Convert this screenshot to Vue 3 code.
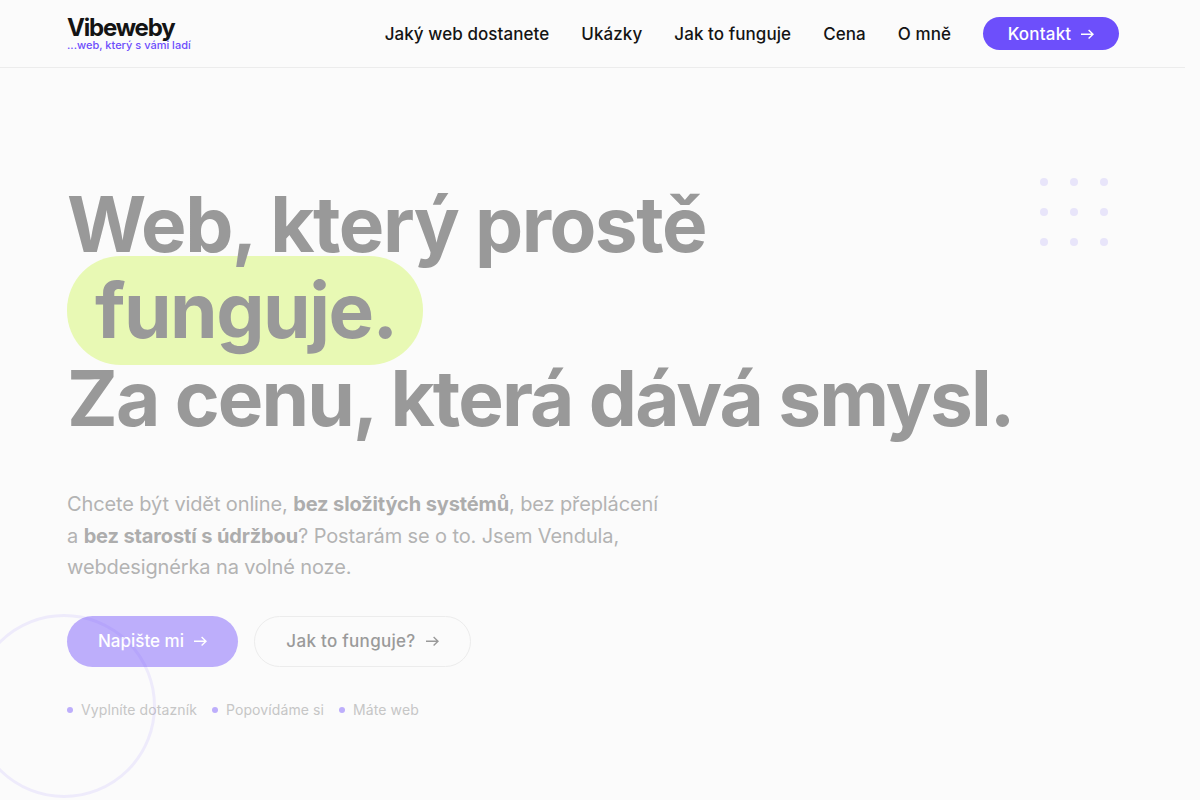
<script setup>
const links = ['Jaký web dostanete', 'Ukázky', 'Jak to funguje', 'Cena', 'O mně']
const steps = ['Vyplníte dotazník', 'Popovídáme si', 'Máte web']
</script>

<template>
  <div class="page">
    <header class="header">
      <div class="logo">
        <span class="logo-name">Vibeweby</span>
        <span class="logo-sub">...web, který s vámi ladí</span>
      </div>
      <nav class="nav">
        <a v-for="link in links" :key="link" class="nav-link">{{ link }}</a>
        <a class="nav-cta">Kontakt
          <svg class="arrow" width="14" height="12" viewBox="0 0 14 12" fill="none" stroke="currentColor" stroke-width="1.4"><path d="M1 6.2h12M8.6 2l4.4 4.2-4.4 4.2" /></svg>
        </a>
      </nav>
    </header>

    <main class="hero">
      <div class="circle"></div>
      <div class="dots">
        <span v-for="n in 9" :key="n" class="dot"></span>
      </div>
      <h1 class="title">
        <span class="line">Web, který prostě</span>
        <span class="pill">funguje.</span>
        <span class="line line-long">Za cenu, která dává smysl.</span>
      </h1>
      <p class="lead">
        Chcete být vidět online, <b>bez složitých systémů</b>, bez přeplácení<br />
        a <b>bez starostí s údržbou</b>? Postarám se o to. Jsem Vendula,<br />
        webdesignérka na volné noze.
      </p>
      <div class="actions">
        <a class="btn btn-primary">Napište mi
          <svg class="arrow" width="14" height="12" viewBox="0 0 14 12" fill="none" stroke="currentColor" stroke-width="1.4"><path d="M1 6.2h12M8.6 2l4.4 4.2-4.4 4.2" /></svg>
        </a>
        <a class="btn btn-ghost">Jak to funguje?
          <svg class="arrow" width="14" height="12" viewBox="0 0 14 12" fill="none" stroke="currentColor" stroke-width="1.4"><path d="M1 6.2h12M8.6 2l4.4 4.2-4.4 4.2" /></svg>
        </a>
      </div>
      <ul class="steps">
        <li v-for="step in steps" :key="step"><i></i>{{ step }}</li>
      </ul>
    </main>
  </div>
</template>

<style>
html, body {
  margin: 0;
  background: #fbfbfb;
  overflow: hidden;
}
</style>

<style scoped>
.page {
  width: 1185px;
  height: 800px;
  position: relative;
  font-family: "Inter", "Liberation Sans", sans-serif;
  color: #141414;
}

.header {
  height: 67px;
  border-bottom: 1px solid #ececec;
  padding: 0 66px 0 67px;
  display: flex;
  align-items: center;
  justify-content: space-between;
}

.logo {
  display: flex;
  flex-direction: column;
}

.logo-name {
  font-size: 24px;
  font-weight: 700;
  line-height: 24px;
  letter-spacing: -1.2px;
}

.logo-sub {
  font-size: 11px;
  font-weight: 500;
  line-height: 11px;
  color: #6d4dfb;
}

.nav {
  display: flex;
  align-items: center;
  gap: 32px;
}

.nav-link {
  font-size: 17px;
  font-weight: 500;
  letter-spacing: 0.07px;
}

.nav-cta {
  height: 33px;
  width: 136px;
  border-radius: 17px;
  background: #6d4ffb;
  color: #fff;
  font-size: 17px;
  font-weight: 500;
  letter-spacing: 0.2px;
  display: flex;
  align-items: center;
  justify-content: center;
  gap: 9px;
}

.hero {
  padding: 113px 0 0 67px;
}

.circle {
  position: absolute;
  left: -28px;
  top: 614px;
  width: 184px;
  height: 184px;
  box-sizing: border-box;
  border: 3px solid rgba(109, 79, 251, 0.09);
  border-radius: 50%;
}

.dots {
  position: absolute;
  top: 178px;
  left: 1040px;
  display: grid;
  grid-template-columns: repeat(3, 8px);
  gap: 22px;
}

.dot {
  width: 8px;
  height: 8px;
  border-radius: 50%;
  background: #e8e5fa;
}

.title {
  margin: 0;
  font-size: 76.5px;
  font-weight: 700;
  line-height: 87px;
  letter-spacing: -1.5px;
  color: #999;
}

.line {
  display: block;
}

.line-long {
  letter-spacing: -1.9px;
}

.pill {
  display: block;
  width: 356px;
  height: 109px;
  margin: -12px 0 -10px;
  padding: 0 28px;
  box-sizing: border-box;
  line-height: 109px;
  border-radius: 54px;
  background: #e8f9b4;
}

.lead {
  margin: 47px 0 0;
  font-size: 20px;
  line-height: 31.5px;
  letter-spacing: -0.12px;
  color: #b3b3b3;
}

.lead b {
  font-weight: 700;
  color: #adadad;
}

.actions {
  display: flex;
  gap: 16px;
  margin-top: 32px;
}

.btn {
  height: 51px;
  box-sizing: border-box;
  border-radius: 26px;
  font-size: 17px;
  font-weight: 500;
  display: flex;
  align-items: center;
  justify-content: center;
  gap: 9px;
}

.btn-primary {
  width: 171px;
  background: #bdaefb;
  color: #fff;
}

.btn-ghost {
  width: 217px;
  border: 1px solid #ececec;
  color: #9a9a9a;
  letter-spacing: 0.3px;
}

.steps {
  list-style: none;
  margin: 34px 0 0;
  padding: 0;
  display: flex;
  gap: 15px;
  font-size: 14px;
  line-height: 18px;
  letter-spacing: 0.1px;
  color: #c6c6c6;
}

.steps li {
  display: flex;
  align-items: center;
  gap: 8px;
}

.steps i {
  width: 6px;
  height: 6px;
  border-radius: 50%;
  background: #bdaefb;
}
</style>
